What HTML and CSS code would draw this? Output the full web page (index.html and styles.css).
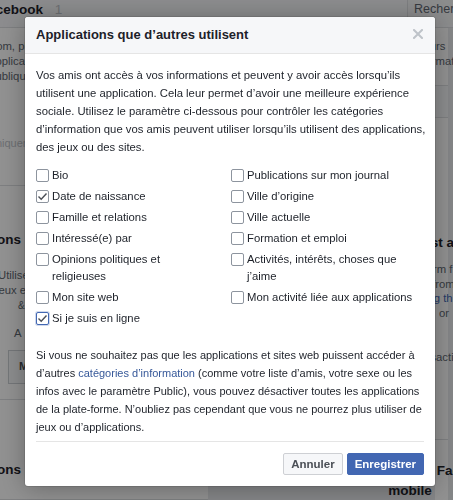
FILE: index.html
```html
<!DOCTYPE html>
<html lang="fr">
<head>
<meta charset="utf-8">
<title>Applications que d'autres utilisent</title>
<link rel="stylesheet" href="styles.css">
</head>
<body>
<div class="page">
  <header class="topbar">
    <div class="brand">Facebook <span class="count">1</span></div>
    <div class="search">Rechercher</div>
  </header>
  <main class="cols">
    <section class="col col-left">
      <div class="card card-top">
        <p class="muted">Nom, photo de profil</p>
        <p class="muted">Applications</p>
        <p class="muted">Publique</p>
        <p class="faint">Uniquement</p>
      </div>
      <div class="card card-mid">
        <h2 class="bg-head">Applications</h2>
        <p class="muted l1">Utilisez</p>
        <p class="muted l2">jeux et</p>
        <p class="muted tiny">&amp;</p>
        <p class="muted letter">A</p>
        <span class="bg-btn">Modifier</span>
      </div>
      <div class="card card-bot">
        <h2 class="bg-head">Applications</h2>
      </div>
    </section>
    <section class="col col-right">
      <div class="card card-top">
        <p class="muted r1">Plusieurs</p>
        <p class="muted r2">Informations</p>
      </div>
      <div class="strip"></div>
      <div class="card card-mid">
        <h2 class="bg-head">Test apps</h2>
        <p class="muted m1">Platform f</p>
        <p class="muted m2">from</p>
        <p class="link m3">using th</p>
        <p class="muted m4">or</p>
        <p class="muted gap">Désactiver</p>
      </div>
      <div class="card card-bot">
        <h2 class="bg-head center">Ancienne version Facebook<br>mobile</h2>
      </div>
    </section>
  </main>
</div>

<div class="overlay"></div>

<div class="dialog" role="dialog">
  <div class="dlg-head">
    <h1 class="dlg-title">Applications que d’autres utilisent</h1>
    <span class="dlg-close" aria-label="Fermer">
      <svg width="10" height="10" viewBox="0 0 10 10"><path d="M1 1L9 9M9 1L1 9" stroke="#bec3c9" stroke-width="2" stroke-linecap="square"/></svg>
    </span>
  </div>
  <div class="dlg-body">
    <p class="para">Vos amis ont accès à vos informations et peuvent y avoir accès lorsqu’ils utilisent une application. Cela leur permet d’avoir une meilleure expérience sociale. Utilisez le paramètre ci-dessous pour contrôler les catégories d’information que vos amis peuvent utiliser lorsqu’ils utilisent des applications, des jeux ou des sites.</p>
    <div class="opts">
      <label class="opt"><span class="box"></span><span class="txt">Bio</span></label>
      <label class="opt"><span class="box"></span><span class="txt">Publications sur mon journal</span></label>
      <label class="opt"><span class="box"><svg width="11" height="11" viewBox="0 0 11 11"><path d="M1.5 5.5L4.2 8.2L9.5 2.5" fill="none" stroke="#4b4f56" stroke-width="1.4"/></svg></span><span class="txt">Date de naissance</span></label>
      <label class="opt"><span class="box"></span><span class="txt">Ville d’origine</span></label>
      <label class="opt"><span class="box"></span><span class="txt">Famille et relations</span></label>
      <label class="opt"><span class="box"></span><span class="txt">Ville actuelle</span></label>
      <label class="opt"><span class="box"></span><span class="txt">Intéressé(e) par</span></label>
      <label class="opt"><span class="box"></span><span class="txt">Formation et emploi</span></label>
      <label class="opt"><span class="box"></span><span class="txt">Opinions politiques et religieuses</span></label>
      <label class="opt"><span class="box"></span><span class="txt">Activités, intérêts, choses que j’aime</span></label>
      <label class="opt"><span class="box"></span><span class="txt">Mon site web</span></label>
      <label class="opt"><span class="box"></span><span class="txt">Mon activité liée aux applications</span></label>
      <label class="opt"><span class="box focus"><svg width="11" height="11" viewBox="0 0 11 11"><path d="M1.5 5.5L4.2 8.2L9.5 2.5" fill="none" stroke="#4b4f56" stroke-width="1.4"/></svg></span><span class="txt">Si je suis en ligne</span></label>
    </div>
    <p class="para para-foot">Si vous ne souhaitez pas que les applications et sites web puissent accéder à d’autres <a class="lnk" href="#">catégories d’information</a> (comme votre liste d’amis, votre sexe ou les infos avec le paramètre Public), vous pouvez désactiver toutes les applications de la plate-forme. N’oubliez pas cependant que vous ne pourrez plus utiliser de jeux ou d’applications.</p>
  </div>
  <div class="dlg-foot">
    <button class="btn btn-cancel" type="button">Annuler</button>
    <button class="btn btn-save" type="button">Enregistrer</button>
  </div>
</div>
</body>
</html>
```

FILE: styles.css
```css
* { box-sizing: border-box; }
html, body { margin: 0; padding: 0; }
body {
  width: 453px;
  height: 500px;
  overflow: hidden;
  background: #e9ebee;
  font-family: "Liberation Sans", Arial, sans-serif;
  font-size: 11.3px;
  color: #1d2129;
}

/* ---------- background page ---------- */
.page { width: 453px; height: 500px; overflow: hidden; white-space: nowrap; }
.topbar {
  height: 28px;
  display: flex;
  align-items: center;
  justify-content: space-between;
  background: #f6f7f9;
  border-bottom: 1px solid #dddfe2;
}
.brand {
  margin-left: -20px;
  font-weight: bold;
  font-size: 13.5px;
  color: #1d2129;
  margin-top: -8px;
}
.count { font-weight: normal; color: #bec3c9; margin-left: 8px; }
.search {
  margin-right: -60px;
  width: 106px;
  height: 28px;
  padding: 5px 6px;
  border-left: 1px solid #dddfe2;
  background: #f5f6f7;
  color: #606770;
  font-size: 12.5px;
  margin-top: -6px;
}
.cols {
  display: grid;
  grid-template-columns: 220px 240px;
  margin-left: -12px;
}
.col { display: flex; flex-direction: column; }
.col-right { margin-left: 227px; }
.card { background: #fff; border-bottom: 1px solid #dddfe2; }
.card p { margin: 0; line-height: 15px; }
.muted { color: #606770; }
.faint { color: #bec3c9; font-size: 11px; margin-top: 52px !important; }
.link { color: #4267b2; }
.bg-head { margin: 0; font-size: 13.5px; font-weight: bold; color: #1d2129; line-height: 18px; }

.col-left .card-top { height: 158px; padding-top: 11px; }
.col-left .card-mid { height: 214px; padding-top: 45px; }
.col-left .card-mid .bg-head { margin-bottom: 18.5px; }
.col-left .bg-head { text-indent: -48px; }
.col-left .l1 { padding-left: 10px; }
.col-left .l2 { padding-left: 8px; }
.col-left .tiny { font-size: 10px; padding-left: 30px; }
.col-left .letter { margin-top: 13px; padding-left: 26px; }
.col-left .card-bot { height: 100px; padding-top: 61px; }
.bg-btn {
  display: block;
  width: 80px;
  margin-top: 9px;
  margin-left: 20px;
  border: 1px solid #ccd0d5;
  background: #f6f7f9;
  padding: 9px 10px;
  font-weight: bold;
  color: #4b4f56;
  height: 34px;
}

.col-right .card-top { height: 58px; padding-top: 11px; }
.col-right .r1 { text-indent: -36px; }
.col-right .r2 { text-indent: -22px; }
.col-right .strip { height: 32px; background: #f6f7f9; border-bottom: 1px solid #dddfe2; }
.col-right .card-mid { padding-top: 116px; height: 322px; }
.col-right .card-mid .bg-head { margin-bottom: 10px; text-indent: -19px; }
.col-right .card-mid p { line-height: 14.5px; }
.col-right .m1 { text-indent: -31px; }
.col-right .m2 { text-indent: -3px; }
.col-right .m3 { text-indent: -22px; }
.col-right .m4 { text-indent: 4px; }
.col-right .gap { margin-top: 30px; text-indent: -19px; }
.col-right .card-bot { padding-top: 21px; height: 80px; }
.col-right .bg-head.center { margin-left: -130px; line-height: 20px; white-space: normal; width: 210px; text-align: center; }

.overlay {
  position: fixed;
  inset: 0;
  background: rgba(0, 0, 0, 0.43);
}

/* ---------- dialog ---------- */
.dialog {
  position: fixed;
  left: 25px;
  top: 17px;
  width: 410px;
  background: #fff;
  border-radius: 3px;
  box-shadow: 0 2px 26px rgba(0, 0, 0, .3), 0 0 0 1px rgba(0, 0, 0, .1);
  overflow: hidden;
}
.dlg-head {
  height: 37px;
  background: #f6f7f9;
  border-bottom: 1px solid #e5e5e5;
  display: flex;
  align-items: center;
  justify-content: space-between;
  padding: 0 12px 0 11px;
}
.dlg-title {
  margin: 0;
  font-size: 13px;
  font-weight: bold;
  color: #1d2129;
  line-height: 18px;
}
.dlg-body { padding: 12px 9px 5px 11px; }
.para { margin: 0; line-height: 18px; color: #1d2129; }
.para-foot { font-size: 11px; }
.opts {
  display: grid;
  grid-template-columns: 195px 1fr;
  row-gap: 4px;
  margin-top: 11px;
  margin-bottom: 19px;
}
.opt { display: flex; align-items: flex-start; line-height: 17px; color: #1d2129; }
.opt:nth-child(odd) .txt { max-width: 140px; }
.box {
  flex: none;
  width: 13px;
  height: 13px;
  margin-top: 2px;
  margin-right: 3px;
  border: 1px solid #8d949e;
  border-radius: 2px;
  background: #fff;
  display: flex;
  align-items: center;
  justify-content: center;
}
.box.focus { border-color: #4267b2; box-shadow: 0 0 0 1px rgba(66, 103, 178, .25); }
.lnk { color: #365899; text-decoration: none; }
.dlg-foot {
  margin: 0 11px;
  border-top: 1px solid #e5e5e5;
  padding: 11px 0;
  display: flex;
  justify-content: flex-end;
  gap: 4px;
}
.btn {
  font-family: "Liberation Sans", Arial, sans-serif;
  font-size: 11.5px;
  font-weight: bold;
  height: 22px;
  line-height: 20px;
  padding: 0 7px;
  border-radius: 2px;
  border: 1px solid;
  cursor: pointer;
}
.btn-cancel { background: #f6f7f9; border-color: #ced0d4; color: #4b4f56; }
.btn-save { background: #4267b2; border-color: #4267b2; color: #fff; }
```
